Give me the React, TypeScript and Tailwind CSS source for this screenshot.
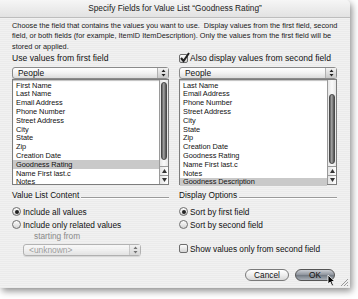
import React from "react";

const firstFields = [
  "First Name",
  "Last Name",
  "Email Address",
  "Phone Number",
  "Street Address",
  "City",
  "State",
  "Zip",
  "Creation Date",
  "Goodness Rating",
  "Name First last.c",
  "Notes",
];

const secondFields = [
  "Last Name",
  "Email Address",
  "Phone Number",
  "Street Address",
  "City",
  "State",
  "Zip",
  "Creation Date",
  "Goodness Rating",
  "Name First last.c",
  "Notes",
  "Goodness Description",
];

function Arrows() {
  return (
    <svg width="5" height="8" viewBox="0 0 5 8">
      <path d="M2.5 0.5 L4.5 3 H0.5 Z M2.5 7.5 L4.5 5 H0.5 Z" fill="#222" />
    </svg>
  );
}

function Popup({ label, disabled }: { label: string; disabled?: boolean }) {
  return (
    <div
      className={`flex h-[12px] items-center rounded-[3px] border border-[#8a8a8a] bg-gradient-to-b from-white via-[#f2f2f2] to-[#dcdcdc] shadow-[0_1px_0_#c8c8c8] ${
        disabled ? "opacity-60" : ""
      }`}
    >
      <span className={`flex-1 pl-[5px] text-[8.4px] leading-none ${disabled ? "text-[#666]" : "text-[#111]"}`}>{label}</span>
      <span className="flex h-full w-[11px] items-center justify-center border-l border-[#b0b0b0] bg-gradient-to-b from-[#f4f4f4] to-[#c8c8c8]">
        <Arrows />
      </span>
    </div>
  );
}

function ScrollBar({ thumbTop, thumbHeight }: { thumbTop: number; thumbHeight: number }) {
  return (
    <div className="flex w-[9px] flex-col border-l border-[#9a9a9a] bg-[repeating-linear-gradient(90deg,#e6e6e6_0px,#fafafa_4px,#e6e6e6_8px)]">
      <div className="relative flex-1">
        <div
          className="absolute left-[1px] right-[1px] rounded-[4px] border border-[#4a4a4a] bg-[linear-gradient(90deg,#5c5c5c,#a9a9a9_45%,#8a8a8a_60%,#4f4f4f)]"
          style={{ top: thumbTop, height: thumbHeight }}
        />
      </div>
      <div className="flex h-[9px] items-center justify-center border-t border-[#9a9a9a] bg-gradient-to-r from-[#e4e4e4] to-white">
        <svg width="5" height="4" viewBox="0 0 5 4">
          <path d="M2.5 0 L5 4 H0 Z" fill="#333" />
        </svg>
      </div>
      <div className="flex h-[9px] items-center justify-center border-t border-[#9a9a9a] bg-gradient-to-r from-[#e4e4e4] to-white">
        <svg width="5" height="4" viewBox="0 0 5 4">
          <path d="M0 0 H5 L2.5 4 Z" fill="#333" />
        </svg>
      </div>
    </div>
  );
}

function FieldList({
  items,
  selected,
  thumbTop,
  thumbHeight,
}: {
  items: string[];
  selected: string;
  thumbTop: number;
  thumbHeight: number;
}) {
  return (
    <div className="flex h-[106px] border border-[#7d7d7d] bg-white shadow-[inset_0_1px_1px_rgba(0,0,0,0.25)]">
      <div className="flex-1 pt-[1px]">
        {items.map((it) => (
          <div
            key={it}
            className={`flex h-[8.8px] items-center pl-[3px] text-[7.4px] leading-none tracking-[-0.05px] text-[#111] ${
              it === selected ? "bg-[#c9c9c9]" : ""
            }`}
          >
            {it}
          </div>
        ))}
      </div>
      <ScrollBar thumbTop={thumbTop} thumbHeight={thumbHeight} />
    </div>
  );
}

function SectionTitle({ text }: { text: string }) {
  return (
    <div className="flex items-center gap-[2px]">
      <span className="text-[8.3px] leading-none text-[#111]">{text}</span>
      <span className="mt-[5px] h-px flex-1 bg-[#9a9a9a] shadow-[0_1px_0_#fff]" />
    </div>
  );
}

function Radio({ on, label }: { on?: boolean; label: string }) {
  return (
    <div className="flex items-center gap-[2px]">
      <span className="flex h-[9px] w-[9px] items-center justify-center rounded-full border border-[#6e6e6e] bg-gradient-to-b from-[#fdfdfd] to-[#d4d4d4]">
        {on && <span className="h-[4px] w-[4px] rounded-full bg-[#222]" />}
      </span>
      <span className="text-[8.3px] leading-none text-[#111]">{label}</span>
    </div>
  );
}

function Check({ on, label, big }: { on?: boolean; label: string; big?: boolean }) {
  return (
    <div className="flex items-center gap-[2px]">
      <span className="relative h-[9px] w-[9px] rounded-[2px] border border-[#6e6e6e] bg-gradient-to-b from-[#fdfdfd] to-[#d4d4d4]">
        {on && (
          <svg className="absolute -left-[1px] -top-[3px]" width="11" height="11" viewBox="0 0 11 11">
            <path d="M2 6 L4.5 9 L10 1" fill="none" stroke="#222" strokeWidth="2" />
          </svg>
        )}
      </span>
      <span className={`${big ? "text-[8.6px]" : "text-[8.3px]"} leading-none text-[#111]`}>{label}</span>
    </div>
  );
}

export default function App() {
  return (
    <div className="h-[299px] w-[358px] overflow-hidden bg-white font-['Liberation_Sans',Arial,sans-serif]">
      <div className="relative flex h-[288px] w-[350px] flex-col overflow-hidden rounded-tr-[5px] bg-[repeating-linear-gradient(0deg,#ebebeb_0px,#ebebeb_1px,#f1f1f1_1px,#f1f1f1_2px)] shadow-[2px_3px_7px_rgba(0,0,0,0.45)]">
        {/* title bar */}
        <div className="flex h-[18px] items-center justify-center border-b border-[#bdbdbd] bg-gradient-to-b from-[#f6f6f6] to-[#e2e2e2]">
          <span className="text-[8.3px] leading-none text-[#222]">
            Specify Fields for Value List “Goodness Rating”
          </span>
        </div>

        <div className="flex flex-1 flex-col px-[12px] pt-[3px]">
          <p className="whitespace-nowrap text-[7.35px] leading-[10.3px] text-[#1a1a1a]">
            Choose the field that contains the values you want to use.&nbsp; Display values from the first field, second
            <br />
            field, or both fields (for example, ItemID ItemDescription). Only the values from the first field will be
            <br />
            stored or applied.
          </p>

          <div className="mt-[1px] flex gap-[10px]">
            {/* left column */}
            <div className="flex w-[157px] flex-col">
              <div className="flex h-[11px] items-center text-[8.6px] leading-none text-[#111]">
                Use values from first field
              </div>
              <div className="mt-[3px]">
                <Popup label="People" />
              </div>
              <div>
                <FieldList items={firstFields} selected="Goodness Rating" thumbTop={2} thumbHeight={78} />
              </div>
              <div className="mt-[6px]">
                <SectionTitle text="Value List Content" />
              </div>
              <div className="mt-[8px] flex flex-col gap-[4px]">
                <Radio on label="Include all values" />
                <Radio label="Include only related values" />
              </div>
              <div className="mt-[3px] pl-[22px] text-[8.3px] leading-none text-[#888]">starting from</div>
              <div className="mt-[4px] w-[129px] pl-[11px]">
                <Popup label="<unknown>" disabled />
              </div>
            </div>

            {/* right column */}
            <div className="flex w-[158px] flex-col">
              <div className="flex h-[11px] items-center">
                <Check on big label="Also display values from second field" />
              </div>
              <div className="mt-[3px]">
                <Popup label="People" />
              </div>
              <div>
                <FieldList items={secondFields} selected="Goodness Description" thumbTop={14} thumbHeight={70} />
              </div>
              <div className="mt-[6px]">
                <SectionTitle text="Display Options" />
              </div>
              <div className="mt-[8px] flex flex-col gap-[4px]">
                <Radio on label="Sort by first field" />
                <Radio label="Sort by second field" />
              </div>
              <div className="mt-[15px]">
                <Check label="Show values only from second field" />
              </div>
              <div className="mt-[16px] flex justify-end gap-[6px] pr-[2px]">
                <button className="flex h-[12px] w-[44px] items-center justify-center rounded-full border border-[#7a7a7a] bg-gradient-to-b from-white via-[#eeeeee] to-[#d6d6d6] text-[8.3px] leading-none text-[#111]">
                  Cancel
                </button>
                <button className="flex h-[12px] w-[40px] items-center justify-center rounded-full border border-[#555] bg-[linear-gradient(180deg,#c9ccd2,#8d939c_50%,#767d86_55%,#aab0b8)] text-[8.3px] leading-none text-[#111]">
                  OK
                </button>
              </div>
            </div>
          </div>
        </div>

        {/* resize grip */}
        <svg className="absolute bottom-[1px] right-[1px]" width="10" height="10" viewBox="0 0 10 10">
          <path d="M9 2 L2 9 M9 5 L5 9 M9 8 L8 9" stroke="#999" strokeWidth="1" />
        </svg>
        {/* cursor */}
        <svg className="absolute left-[327px] top-[274px]" width="9" height="13" viewBox="0 0 9 13">
          <path d="M1 1 L1 10 L3.2 8 L5 12 L6.5 11.3 L4.8 7.5 L7.8 7.5 Z" fill="#000" stroke="#fff" strokeWidth="0.8" />
        </svg>
      </div>
    </div>
  );
}
